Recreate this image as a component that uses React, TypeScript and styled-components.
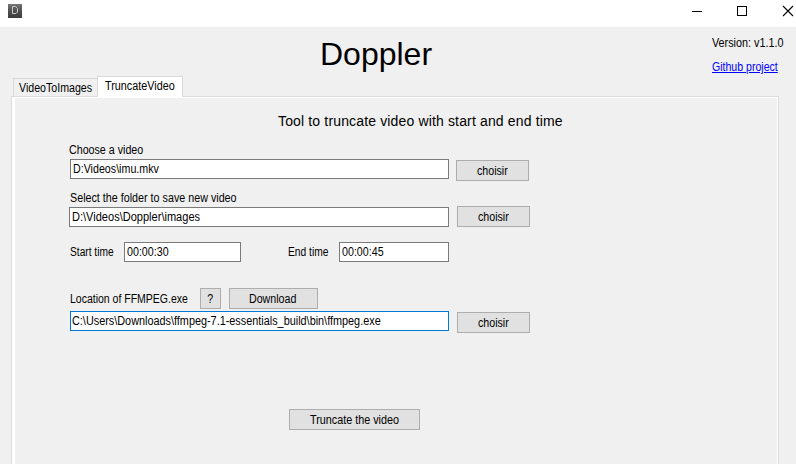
import React from "react";
import styled, { createGlobalStyle } from "styled-components";

const Global = createGlobalStyle`
  * { box-sizing: border-box; }
  body { margin: 0; overflow: hidden; background: #f0f0f0; }
`;

const Window = styled.main`
  width: 796px;
  height: 464px;
  overflow: hidden;
  display: flex;
  flex-direction: column;
  background: #f0f0f0;
  color: #000;
  font-family: "Liberation Sans", Arial, sans-serif;
  font-size: 12px;
  line-height: 14px;
`;

const TitleBar = styled.header`
  height: 27px;
  flex: none;
  display: flex;
  justify-content: space-between;
  background: #fff;
  padding-left: 8px;
`;

const AppIcon = styled.svg`
  margin-top: 4px;
`;

const Controls = styled.div`
  display: flex;
  gap: 31px;
  padding: 4px 1px 0 0;
`;

const Header = styled.div`
  height: 49px;
  flex: none;
  display: flex;
  justify-content: space-between;
`;

const AppName = styled.h1`
  margin: 8px 0 0 320px;
  font-size: 32px;
  line-height: 38px;
  font-weight: 400;
`;

const About = styled.div`
  width: 84px;
  padding-top: 9px;
  display: flex;
  flex-direction: column;
  align-items: flex-start;
  gap: 10px;
`;

/* Narrow UI lettering: the glyphs are condensed horizontally. */
const Text = styled.span<{ $scale?: number; $center?: boolean }>`
  display: inline-block;
  flex: none;
  white-space: pre;
  transform: scaleX(${(p) => p.$scale ?? 0.89});
  transform-origin: ${(p) => (p.$center ? "center" : "left")};
`;

const Link = styled(Text)`
  color: #0000ff;
  text-decoration: underline;
`;

const Tabs = styled.nav`
  height: 21px;
  flex: none;
  display: flex;
  align-items: flex-end;
  padding-left: 13px;
  position: relative;
  z-index: 1;
`;

const Tab = styled.div<{ $active?: boolean }>`
  width: ${(p) => (p.$active ? 86 : 84)}px;
  height: ${(p) => (p.$active ? 21 : 18)}px;
  margin-bottom: ${(p) => (p.$active ? 0 : 1)}px;
  padding: ${(p) => (p.$active ? "2px 0 0 7px" : "2px 0 0 5px")};
  background: ${(p) => (p.$active ? "#fff" : "#f0f0f0")};
  border: 1px solid #d9d9d9;
  border-bottom: 0;
  ${(p) => !p.$active && "border-right: 0;"}
`;

const Panel = styled.section`
  width: 768px;
  height: 380px;
  flex: none;
  margin: -1px 0 0 11px;
  border: 1px solid #dcdcdc;
  background: #f0f0f0;
  box-shadow: inset 3px 1px #fff, inset -1px 0 #fff;
  padding-left: 58px;
`;

const Heading = styled.h2`
  margin: 16px 0 0 208px;
  font-size: 14px;
  line-height: 17px;
  font-weight: 400;
  letter-spacing: 0.15px;
  white-space: nowrap;
`;

const Row = styled.div<{ $top: number; $left?: number; $h?: number }>`
  display: flex;
  align-items: flex-start;
  height: ${(p) => p.$h ?? 14}px;
  margin: ${(p) => p.$top}px 0 0 ${(p) => p.$left ?? 0}px;
`;

const Caption = styled.div<{ $w: number; $top?: number; $indent?: number }>`
  width: ${(p) => p.$w}px;
  flex: none;
  padding: ${(p) => p.$top ?? 0}px 0 0 ${(p) => p.$indent ?? 0}px;
`;

const Field = styled.div<{ $w: number; $focused?: boolean }>`
  width: ${(p) => p.$w}px;
  height: 20px;
  flex: none;
  padding: 2px 0 0 ${(p) => (p.$focused ? 1 : 2)}px;
  background: #fff;
  border: 1px solid ${(p) => (p.$focused ? "#0078d7" : "#7a7a7a")};
`;

const Button = styled.button<{ $w?: number; $top?: number; $left?: number }>`
  width: ${(p) => p.$w ?? 73}px;
  height: 21px;
  flex: none;
  display: flex;
  justify-content: center;
  align-items: flex-start;
  padding: 3px 1px 0 0;
  margin: ${(p) => p.$top ?? 0}px 0 0 ${(p) => p.$left ?? 0}px;
  background: #e1e1e1;
  border: 1px solid #adadad;
  border-radius: 0;
  color: #000;
  font: inherit;
`;

export default function App() {
  return (
    <Window>
      <Global />
      <TitleBar>
        <AppIcon width="14" height="14" viewBox="0 0 14 14">
          <defs>
            <linearGradient id="badge" x1="0" y1="0" x2="0" y2="1">
              <stop offset="0" stopColor="#777" />
              <stop offset="0.5" stopColor="#505050" />
              <stop offset="1" stopColor="#3c3c3c" />
            </linearGradient>
          </defs>
          <rect width="14" height="14" fill="url(#badge)" />
          <path d="M4.5 2.5H7.5L9.5 4.5V8L8 9.5H4.5Z" fill="none" stroke="#c8c8c8" />
        </AppIcon>
        <Controls>
          <svg width="14" height="14" viewBox="0 0 14 14" shapeRendering="crispEdges">
            <path d="M1 7.5H11" stroke="#000" />
          </svg>
          <svg width="14" height="14" viewBox="0 0 14 14" shapeRendering="crispEdges">
            <path d="M1.5 2.5H10.5V11.5H1.5Z" fill="none" stroke="#000" />
          </svg>
          <svg width="14" height="14" viewBox="0 0 14 14">
            <path d="M2 2L12 12M12 2L2 12" stroke="#000" strokeWidth="1.1" />
          </svg>
        </Controls>
      </TitleBar>
      <Header>
        <AppName>Doppler</AppName>
        <About>
          <Text $scale={0.9}>Version: v1.1.0</Text>
          <Link $scale={0.88}>Github project</Link>
        </About>
      </Header>
      <Tabs>
        <Tab><Text $scale={0.885}>VideoToImages</Text></Tab>
        <Tab $active><Text $scale={0.9}>TruncateVideo</Text></Tab>
      </Tabs>
      <Panel>
        <Heading>Tool to truncate video with start and end time</Heading>
        <Row $top={13} $left={-1}><Text>Choose a video</Text></Row>
        <Row $top={2} $h={22}>
          <Field $w={379}><Text>D:Videos\imu.mkv</Text></Field>
          <Button $top={1} $left={7}><Text $center>choisir</Text></Button>
        </Row>
        <Row $top={10}><Text $scale={0.895}>Select the folder to save new video</Text></Row>
        <Row $top={2} $left={-1} $h={21}>
          <Field $w={380}><Text $scale={0.92}>D:\Videos\Doppler\images</Text></Field>
          <Button $top={-1} $left={8}><Text $center>choisir</Text></Button>
        </Row>
        <Row $top={14} $h={20}>
          <Caption $w={54} $top={3}><Text $scale={0.85}>Start time</Text></Caption>
          <Field $w={117}><Text>00:00:30</Text></Field>
          <Caption $w={98} $top={3} $indent={47}><Text $scale={0.855}>End time</Text></Caption>
          <Field $w={110}><Text>00:00:45</Text></Field>
        </Row>
        <Row $top={26} $h={21}>
          <Caption $w={130} $top={4}><Text $scale={0.875}>Location of FFMPEG.exe</Text></Caption>
          <Button $w={21}><Text $center>?</Text></Button>
          <Button $w={89} $left={8}><Text $center>Download</Text></Button>
        </Row>
        <Row $top={2} $h={22}>
          <Field $w={379} $focused><Text $scale={0.905}>C:\Users\Downloads\ffmpeg-7.1-essentials_build\bin\ffmpeg.exe</Text></Field>
          <Button $top={1} $left={8}><Text $center>choisir</Text></Button>
        </Row>
        <Row $top={76} $left={219} $h={21}>
          <Button $w={131}><Text $center $scale={0.9}>Truncate the video</Text></Button>
        </Row>
      </Panel>
    </Window>
  );
}
